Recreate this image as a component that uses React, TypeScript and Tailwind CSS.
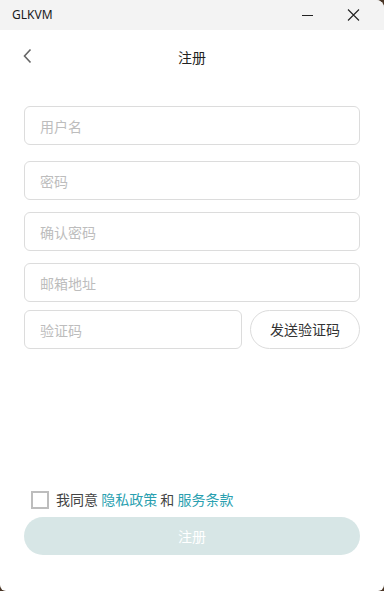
import React from 'react';

const FONT = { fontFamily: '"Noto Sans CJK SC", "Noto Sans", sans-serif' };

const Field: React.FC<{ placeholder: string; className?: string }> = ({ placeholder, className = '' }) => (
  <input
    placeholder={placeholder}
    className={`h-[39px] rounded-[6px] border border-[#dcdcdc] bg-white px-[15px] text-[14px] text-[#333] outline-none placeholder:text-[#bdbdbd] ${className}`}
  />
);

export default function App() {
  return (
    <div className="h-[591px] w-[384px] bg-[#4a3626]" style={FONT}>
      <div className="flex h-full w-full flex-col overflow-hidden rounded-tr-[8px] rounded-b-[6px] bg-white">
        {/* title bar */}
        <div className="flex h-[30px] shrink-0 items-center bg-[#f3f3f3] pl-[12px]">
          <span className="text-[12px] text-[#1a1a1a]" style={{ fontFamily: '"Noto Sans", sans-serif' }}>GLKVM</span>
          <div className="ml-auto flex items-center">
            <svg width="46" height="30" viewBox="0 0 46 30">
              <line x1="10" y1="15.5" x2="21" y2="15.5" stroke="#222" strokeWidth="1" />
            </svg>
            <svg width="46" height="30" viewBox="0 0 46 30">
              <path d="M10 9.5 L21 20.5 M21 9.5 L10 20.5" stroke="#222" strokeWidth="1.1" />
            </svg>
          </div>
        </div>

        {/* header */}
        <div className="relative flex h-[54px] shrink-0 items-center justify-center">
          <svg className="absolute left-[22px] top-[18px]" width="12" height="16" viewBox="0 0 12 16">
            <path d="M8.5 1.5 L2.5 8 L8.5 14.5" fill="none" stroke="#666" strokeWidth="1.6" />
          </svg>
          <span className="text-[14px] text-[#222]">注册</span>
        </div>

        {/* form */}
        <div className="flex flex-col px-[24px] pt-[22px]">
          <Field placeholder="用户名" />
          <Field placeholder="密码" className="mt-[16px]" />
          <Field placeholder="确认密码" className="mt-[12px]" />
          <Field placeholder="邮箱地址" className="mt-[12px]" />
          <div className="mt-[8px] flex gap-[8px]">
            <Field placeholder="验证码" className="w-[218px]" />
            <button className="h-[39px] flex-1 rounded-full border border-[#dcdcdc] bg-white text-[14px] text-[#333]">
              发送验证码
            </button>
          </div>
        </div>

        <div className="flex-1" />

        {/* agreement */}
        <div className="flex flex-col px-[24px] pb-[36px]">
          <div className="flex items-center pl-[7px]">
            <span className="h-[18px] w-[18px] border-2 border-[#bdbdbd] bg-white" />
            <span className="ml-[7px] text-[14px] text-[#444]">
              我同意 <span className="text-[#2a9fb0]">隐私政策</span> 和 <span className="text-[#2a9fb0]">服务条款</span>
            </span>
          </div>
          <button className="mt-[7px] h-[38px] w-full rounded-full bg-[#d7e6e6] text-[14px] text-white">注册</button>
        </div>
      </div>
    </div>
  );
}
